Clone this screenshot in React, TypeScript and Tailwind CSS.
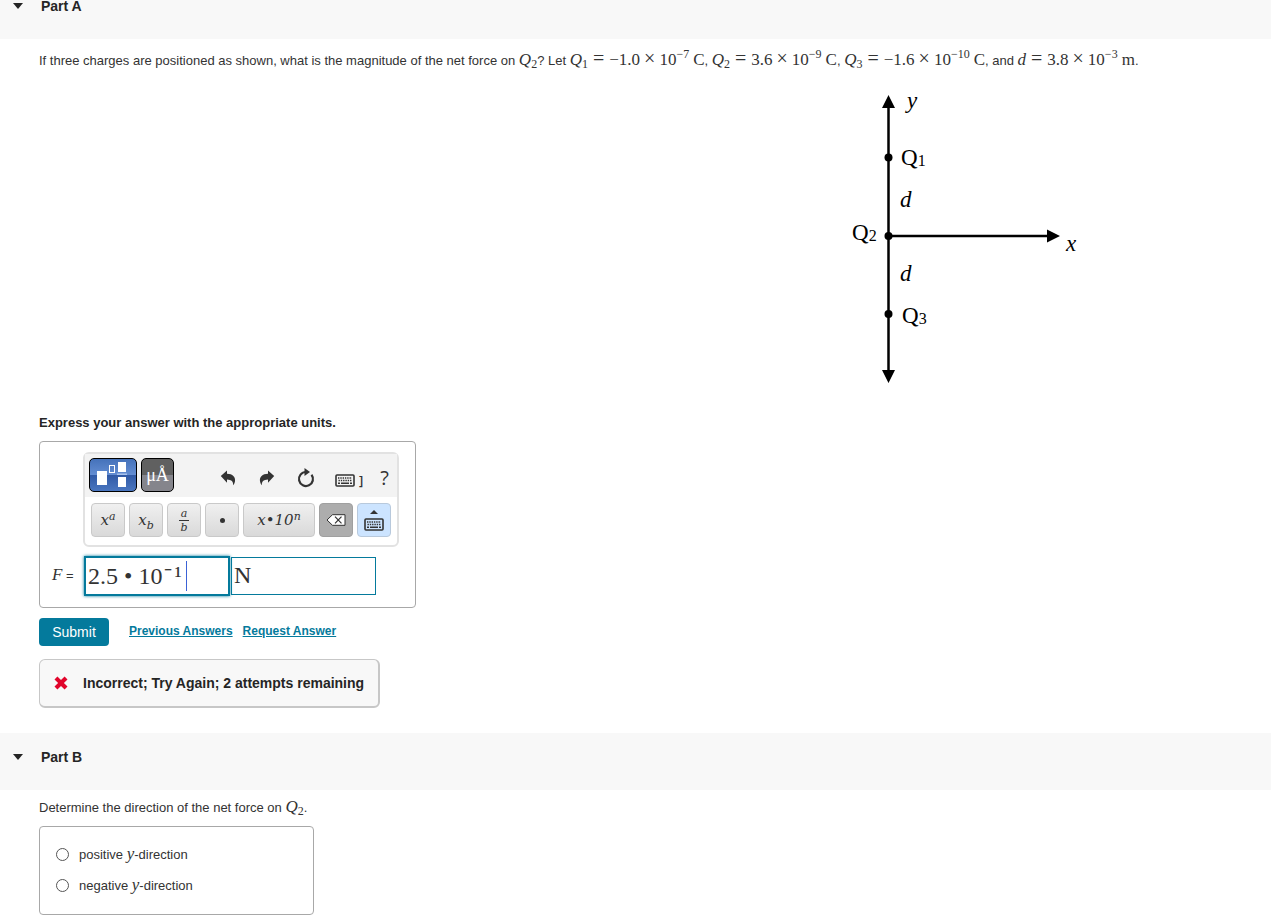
import { useState } from 'react';
import type { ReactNode } from 'react';

const serif = "font-['Liberation_Serif',serif]";

/* ---------- Math text ---------- */

function Q({ n }: { n: number }) {
    return (
        <span className={`${serif} text-[17px] leading-none`}>
            <i>Q</i>
            <sub className="bottom-[-3px] text-[12px]">{n}</sub>
        </span>
    );
}

function Var({ children }: { children: ReactNode }) {
    return <i className={`${serif} text-[17px] leading-none`}>{children}</i>;
}

function Value({ base, exp, unit }: { base: string; exp: string; unit: string }) {
    return (
        <span className={`${serif} text-[17px] leading-none`}>
            <span className="mx-[5px] text-[20px]">=</span>
            {base}
            <span className="mx-[4px] text-[20px]">×</span>
            10
            <sup className="top-[-7px] text-[12px]">{exp}</sup>
            <span className="ml-1">{unit}</span>
        </span>
    );
}

/* ---------- Icons ---------- */

function UndoIcon({ flip = false }: { flip?: boolean }) {
    return (
        <svg width="16" height="16" viewBox="0 0 16 16" className={flip ? '-scale-x-100' : ''} aria-hidden="true">
            <path
                d="M.8 6 7 .5v3.200c5.600.1 8.600 3.300 8 7.500-.2 1.500-.9 2.900-1.900 4.100.4-3.600-1.400-5.700-6.100-5.800v3.200z"
                fill="#333"
            />
        </svg>
    );
}

function ResetIcon() {
    return (
        <svg width="18" height="20" viewBox="0 0 18 20" aria-hidden="true">
            <path d="M14.500 6.700A7 7 0 1 1 9 4" fill="none" stroke="#333" strokeWidth="2.200" />
            <path d="M7.500 0 13 4 7.500 8z" fill="#333" />
        </svg>
    );
}

function KeyboardIcon() {
    return (
        <svg width="20" height="13" viewBox="0 0 20 13" aria-hidden="true">
            <rect x="1" y="1" width="18" height="11" rx="1" fill="none" stroke="#333" strokeWidth="1.600" />
            <path d="M3 4h14M3.500 6.500h13" stroke="#333" strokeWidth="1.400" strokeDasharray="1.400 .9" />
            <path d="M3 9.200h2M6 9.200h8M15 9.200h2" stroke="#333" strokeWidth="1.400" />
        </svg>
    );
}

function BackspaceIcon() {
    return (
        <svg width="20" height="12" viewBox="0 0 20 12" aria-hidden="true">
            <path d="M6.500.7H19v10.600H6.500L1 6z" fill="#fff" stroke="#333" />
            <path d="m9 2.700 6.500 6.600m0-6.600L9 9.300" stroke="#333" strokeWidth="1.200" />
        </svg>
    );
}

function TemplateIcon() {
    return (
        <svg width="32" height="28" viewBox="0 0 32 28" aria-hidden="true">
            <rect x="0" y="10" width="10" height="14" fill="#fff" />
            <rect x="12.500" y="4.500" width="5" height="7" fill="none" stroke="#fff" />
            <rect x="21" y="1" width="8" height="10" fill="#fff" />
            <rect x="20" y="12.500" width="10" height="1.500" fill="#a9c3ec" />
            <rect x="21" y="16" width="8" height="10" fill="#fff" />
        </svg>
    );
}

function CrossIcon() {
    return (
        <svg width="14" height="14" viewBox="0 0 14 14" aria-hidden="true">
            <path
                d="M3.400.5 7 4.100 10.600.5l2.900 2.900L9.900 7l3.600 3.600-2.900 2.900L7 9.900l-3.600 3.600-2.900-2.900L4.100 7 .5 3.400z"
                fill="#e1052b"
            />
        </svg>
    );
}

/* ---------- Figure ---------- */

function ChargeDiagram() {
    return (
        <svg
            width="240"
            height="308"
            viewBox="0 -8 240 308"
            role="img"
            aria-label="Charges on the y axis"
            className={serif}
            fontSize="23"
        >
            <g stroke="#000" strokeWidth="2.500">
                <path d="M38.500 14v270M38.500 147h160" />
            </g>
            <path d="m38.500 6 6.500 13H32zM38.500 294l6.500-13H32zM210 147l-13-6.500v13z" />
            <circle cx="38.500" cy="68.500" r="4" />
            <circle cx="38.500" cy="147" r="4" />
            <circle cx="38.500" cy="225" r="4" />
            <text x="57" y="19" fontStyle="italic">y</text>
            <text x="216" y="162" fontStyle="italic">x</text>
            <text x="50" y="118" fontStyle="italic">d</text>
            <text x="50" y="192" fontStyle="italic">d</text>
            <text x="51" y="76">Q<tspan fontSize="16" dy="1">1</tspan></text>
            <text x="2" y="151">Q<tspan fontSize="16" dy="1">2</tspan></text>
            <text x="52" y="234">Q<tspan fontSize="16" dy="1">3</tspan></text>
        </svg>
    );
}

/* ---------- Parts ---------- */

function PartHeader({ title }: { title: string }) {
    return (
        <header className="h-[57px] bg-[#f8f8f8] pt-[17px] pl-[13px]">
            <h2 className="leading-none">
                <button type="button" aria-expanded="true" className="flex items-center text-sm leading-none font-bold text-[#252525]">
                    <svg width="10" height="6" viewBox="0 0 10 6" className="mr-[18px]" aria-hidden="true">
                        <path d="M0 0h10L5 6z" fill="#252525" />
                    </svg>
                    {title}
                </button>
            </h2>
        </header>
    );
}

function MathKey({ label, wide = false, children }: { label: string; wide?: boolean; children: ReactNode }) {
    return (
        <button
            type="button"
            aria-label={label}
            className={`${wide ? 'w-[72px]' : 'w-[34px]'} flex h-[34px] items-center justify-center rounded border border-[#c9c9c9] bg-linear-to-b from-[#f0f0f0] to-[#d9d9d9] font-['DejaVu_Serif',serif] text-[15px] leading-none text-[#333] italic`}
        >
            {children}
        </button>
    );
}

function ToolButton({ label, children }: { label: string; children: ReactNode }) {
    return (
        <button type="button" aria-label={label} className="flex w-[39px] justify-center">
            {children}
        </button>
    );
}

function Toolbar() {
    return (
        <div role="toolbar" aria-label="Math input" className="w-[316px] rounded-md border-2 border-[#e2e2e2] bg-white">
            <div className="flex h-[43px] items-start bg-[#f3f3f3] pt-1 pl-1 text-[#333]">
                <button
                    type="button"
                    aria-label="Templates"
                    className="flex h-[34px] w-12 items-center justify-center rounded-[5px] border border-black bg-[linear-gradient(#4572ba,#638dd2_50%,#3059a5_50%,#4a76c0)]"
                >
                    <TemplateIcon />
                </button>
                <button
                    type="button"
                    aria-label="Units"
                    className={`${serif} ml-1 h-[34px] w-[33px] rounded-[5px] border border-black bg-linear-to-b from-[#606060] from-50% to-[#85858c] to-50% text-[18px] text-white`}
                >
                    μÅ
                </button>
                <div className="ml-[34px] flex flex-1 items-center pt-2.5 pr-2">
                    <ToolButton label="Undo"><UndoIcon /></ToolButton>
                    <ToolButton label="Redo"><UndoIcon flip /></ToolButton>
                    <ToolButton label="Reset"><ResetIcon /></ToolButton>
                    <button type="button" aria-label="Keyboard shortcuts" className="ml-2.5 flex items-center gap-1 pt-1 font-['Open_Sans',sans-serif] text-[13px] leading-none font-semibold">
                        <KeyboardIcon />]
                    </button>
                    <button type="button" aria-label="Help" className="ml-auto font-['Open_Sans',sans-serif] text-[20px] leading-none">?</button>
                </div>
            </div>
            <div className="flex gap-1 px-1.5 pt-1.5 pb-2">
                <MathKey label="Superscript">
                    <span>x<sup className="top-[-5px] text-[11px]">a</sup></span>
                </MathKey>
                <MathKey label="Subscript">
                    <span>x<sub className="bottom-[-4px] text-[11px]">b</sub></span>
                </MathKey>
                <MathKey label="Fraction">
                    <span className="flex flex-col text-[11px] leading-[11px]">
                        <span className="border-b border-[#333] px-0.5 pb-px">a</span>
                        <span className="pt-px">b</span>
                    </span>
                </MathKey>
                <MathKey label="Dot">
                    <span className="size-[5px] rounded-full bg-[#333]" />
                </MathKey>
                <MathKey label="Scientific notation" wide>
                    <span>x•10<sup className="top-[-5px] text-[11px]">n</sup></span>
                </MathKey>
                <button type="button" aria-label="Backspace" className="flex size-[34px] items-center justify-center rounded border border-[#a0a0a0] bg-[#adadad]">
                    <BackspaceIcon />
                </button>
                <button type="button" aria-label="Toggle keyboard" className="flex size-[34px] flex-col items-center justify-center gap-1 rounded border border-[#b8c9dc] bg-[#cce4ff]">
                    <svg width="8" height="4" viewBox="0 0 8 4" aria-hidden="true">
                        <path d="M0 4h8L4 0z" fill="#333" />
                    </svg>
                    <KeyboardIcon />
                </button>
            </div>
        </div>
    );
}

function AnswerBox() {
    const [value, setValue] = useState('2.5 • 10\u200a⁻\u200a¹');
    const [unit, setUnit] = useState('N');

    return (
        <div className="w-[377px] rounded border border-[#a8a8a8] pt-2.5 pb-[11px]">
            <div className="pl-[43px]">
                <Toolbar />
            </div>
            <div className="mt-[9px] flex items-center pl-3 text-[#333]">
                <label htmlFor="value" className="w-8 pb-1 text-[13px] leading-none">
                    <i className={`${serif} text-[17px]`}>F</i> =
                </label>
                <div className="relative">
                    <input
                        id="value"
                        value={value}
                        onChange={(e) => setValue(e.target.value)}
                        className={`${serif} h-10 w-[146px] border-2 border-[#047a9c] bg-white px-0.5 pb-1 text-[24px] shadow-[0_0_3px_#047a9c] outline-none`}
                    />
                    <span className="absolute top-[5px] left-[102px] h-[30px] w-px bg-[#3b62d6]" />
                </div>
                <input
                    aria-label="Units"
                    value={unit}
                    onChange={(e) => setUnit(e.target.value)}
                    className={`${serif} ml-px h-[38px] w-[145px] border border-[#047a9c] bg-white px-0.5 pb-0.5 text-[24px] outline-none`}
                />
            </div>
        </div>
    );
}

function Direction({ sign }: { sign: string }) {
    return (
        <label className="flex h-[31px] items-center gap-2.5">
            <input
                type="radio"
                name="direction"
                value={sign}
                className="size-[13px] appearance-none rounded-full border border-[#555] bg-white checked:border-4"
            />
            <span>{sign} <Var>y</Var>-direction</span>
        </label>
    );
}

export default function App() {
    return (
        <main className="overflow-hidden bg-white font-['Liberation_Sans',Arial,sans-serif] text-[13px] text-[#333]">
            <section className="-mt-[18px]">
                <PartHeader title="Part A" />
                <div className="px-[39px] pt-[9px]">
                    <p className="leading-6">
                        If three charges are positioned as shown, what is the magnitude of the net force on <Q n={2} />? Let{' '}
                        <Q n={1} /><Value base="−1.0" exp="−7" unit="C" />, <Q n={2} /><Value base="3.6" exp="−9" unit="C" />,{' '}
                        <Q n={3} /><Value base="−1.6" exp="−10" unit="C" />, and <Var>d</Var>
                        <Value base="3.8" exp="−3" unit="m" />.
                    </p>
                    <div className="mt-2 flex justify-end pr-[142px]">
                        <ChargeDiagram />
                    </div>
                    <p className="mt-6 mb-2 font-bold leading-5 text-[#252525]">Express your answer with the appropriate units.</p>
                    <AnswerBox />
                    <div className="mt-2.5 flex items-center text-[12px] font-bold">
                        <button type="button" className="h-7 w-[70px] rounded-sm bg-[#047a9c] text-sm font-normal text-white">
                            Submit
                        </button>
                        <a href="#previous" className="ml-5 pb-0.5 text-[#047a9c] underline">Previous Answers</a>
                        <a href="#request" className="ml-2.5 pb-0.5 text-[#047a9c] underline">Request Answer</a>
                    </div>
                    <div role="status" className="mt-[13px] flex h-[49px] w-fit items-center gap-[15px] rounded-md border border-r-2 border-b-2 border-[#c7c7c7] bg-[#f8f8f8] px-3.5 text-sm font-bold text-[#252525]">
                        <CrossIcon />
                        Incorrect; Try Again; 2 attempts remaining
                    </div>
                </div>
            </section>
            <section className="mt-[25px]">
                <PartHeader title="Part B" />
                <div className="px-[39px] pt-1.5">
                    <p className="leading-6">Determine the direction of the net force on <Q n={2} />.</p>
                    <fieldset aria-label="Direction of the net force" className="mt-1.5 w-[275px] rounded border border-[#a8a8a8] px-4 pt-3 pb-[13px]">
                        <Direction sign="positive" />
                        <Direction sign="negative" />
                    </fieldset>
                </div>
            </section>
        </main>
    );
}
